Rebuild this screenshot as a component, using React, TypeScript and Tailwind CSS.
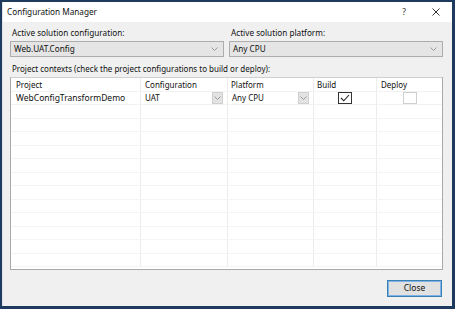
import React from "react";

const font = "font-['Segoe_UI','Noto_Sans',sans-serif]";

const Chevron: React.FC<{ className?: string }> = ({ className }) => (
  <svg width="7" height="4" viewBox="0 0 7 4" className={className}>
    <path d="M0.5 0.5 L3.5 3.5 L6.5 0.5" fill="none" stroke="#999" strokeWidth="1" />
  </svg>
);

const ComboBox: React.FC<{ value: string }> = ({ value }) => (
  <div className="flex h-[16px] w-[214px] items-center justify-between border border-[#adadad] bg-[#e5e5e5] pl-[3px] pr-[5px]">
    <span className="text-[8.2px] text-[#111]">{value}</span>
    <Chevron />
  </div>
);

const CellDrop: React.FC<{ value: string }> = ({ value }) => (
  <div className="flex h-full items-center justify-between border-r border-[#ececec] pl-[4px] pr-[4px]">
    <span>{value}</span>
    <div className="flex h-[12px] w-[11px] items-center justify-center border border-[#d0d0d0] bg-[#e3e3e3]">
      <Chevron />
    </div>
  </div>
);

const CheckBox: React.FC<{ checked: boolean }> = ({ checked }) => (
  <div
    className={`flex h-[12px] w-[14px] items-center justify-center border bg-white ${
      checked ? "border-[#333]" : "border-[#cfcfcf]"
    }`}
  >
    {checked && (
      <svg width="10" height="8" viewBox="0 0 10 8">
        <path d="M1 4 L3.8 6.8 L9 1" fill="none" stroke="#222" strokeWidth="1.1" />
      </svg>
    )}
  </div>
);

const cols = "grid grid-cols-[130px_87px_86px_63px_1fr]";
const emptyRows = Array.from({ length: 12 });

export default function App() {
  return (
    <div className={`h-[309px] w-[455px] bg-[#1f3a5f] pb-[3px] pl-[2px] pr-[3px] pt-[2px] ${font}`}>
      <div className="flex h-full flex-col border-l border-[#dfe4ea] bg-[#f0f0f0]">
        <div className="flex h-[20px] items-center justify-between bg-white pl-[4px] pr-[12px]">
          <span className="text-[8.2px] text-[#111]">Configuration Manager</span>
          <div className="flex items-center gap-[26px] text-[#333]">
            <span className="text-[8.5px]">?</span>
            <svg width="8" height="8" viewBox="0 0 8 8">
              <path d="M0.5 0.5 L7.5 7.5 M7.5 0.5 L0.5 7.5" stroke="#333" strokeWidth="1" />
            </svg>
          </div>
        </div>

        <div className="flex flex-1 flex-col pl-[7px] pr-[9px] text-[8px] text-[#111]">
          <div className="mt-[5px] flex gap-[5px]">
            <div className="flex flex-col">
              <span className="mb-[2px] h-[12px] pl-[2px] text-[8.2px] leading-[12px]">Active solution configuration:</span>
              <ComboBox value="Web.UAT.Config" />
            </div>
            <div className="flex flex-col">
              <span className="mb-[2px] h-[12px] pl-[2px] text-[8.2px] leading-[12px]">Active solution platform:</span>
              <ComboBox value="Any CPU" />
            </div>
          </div>

          <span className="mt-[6px] h-[12px] pl-[2px] leading-[12px]">
            Project contexts (check the project configurations to build or deploy):
          </span>

          <div className="mt-[2px] flex h-[193px] flex-col overflow-hidden border border-[#a9a9a9] border-t-[#d0d0d0] bg-white">
            <div className={`${cols} h-[14px] items-stretch border-b border-[#f2f2f2]`}>
              <div className="flex items-center border-r border-[#ececec] pl-[5px]">Project</div>
              <div className="flex items-center border-r border-[#ececec] pl-[4px]">Configuration</div>
              <div className="flex items-center border-r border-[#ececec] pl-[3px]">Platform</div>
              <div className="flex items-center border-r border-[#ececec] pl-[3px]">Build</div>
              <div className="flex items-center pl-[4px]">Deploy</div>
            </div>
            <div className={`${cols} h-[13px] border-b border-[#f2f2f2]`}>
              <div className="flex items-center border-r border-[#ececec] pl-[5px] text-[8.5px]">WebConfigTransformDemo</div>
              <CellDrop value="UAT" />
              <CellDrop value="Any CPU" />
              <div className="flex items-center justify-center border-r border-[#ececec]">
                <CheckBox checked />
              </div>
              <div className="flex items-center justify-center">
                <CheckBox checked={false} />
              </div>
            </div>
            {emptyRows.map((_, i) => (
              <div key={i} className={`${cols} h-[13.5px] shrink-0 border-b border-[#f4f4f4]`}>
                <div className="border-r border-[#ececec]" />
                <div className="border-r border-[#ececec]" />
                <div className="border-r border-[#ececec]" />
                <div className="border-r border-[#ececec]" />
                <div />
              </div>
            ))}
          </div>

          <div className="mt-[10px] flex justify-end pr-[1px]">
            <button className="flex h-[17px] w-[55px] items-center justify-center border border-[#3c7fb1] bg-[#e1e1e1] text-[8.5px] text-[#111] shadow-[inset_0_0_0_1px_#7eb4ea]">
              Close
            </button>
          </div>
        </div>
      </div>
    </div>
  );
}
